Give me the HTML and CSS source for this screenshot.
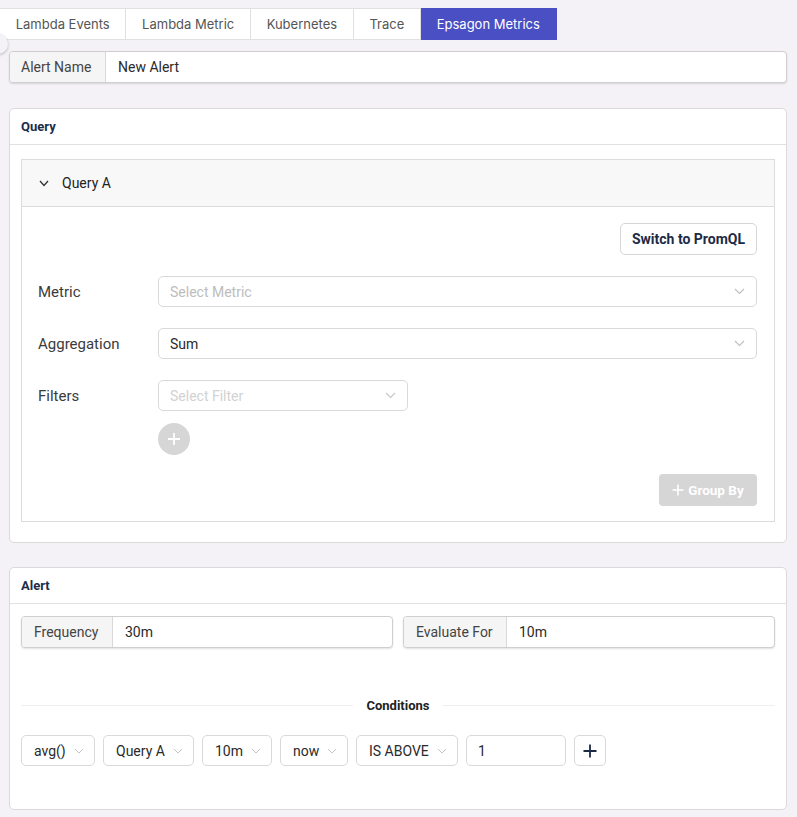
FILE: index.html
```html
<!DOCTYPE html>
<html>
<head>
<meta charset="utf-8">
<link rel="stylesheet" href="styles.css">
</head>
<body>
<div class="tabs">
  <div class="tab">Lambda Events</div>
  <div class="tab">Lambda Metric</div>
  <div class="tab">Kubernetes</div>
  <div class="tab">Trace</div>
  <div class="tab active">Epsagon Metrics</div>
</div>
<div class="knob"></div>
<main class="page">
  <div class="group name-group">
    <div class="addon addon-name">Alert Name</div>
    <div class="group-value">New Alert</div>
  </div>

  <section class="card query-card">
    <div class="card-head">Query</div>
    <div class="card-body">
      <div class="panel">
        <div class="panel-head">
          <svg class="chev-dark" width="10" height="7" viewBox="0 0 10 7"><path d="M1 1l4 4.5L9 1" fill="none" stroke="#333" stroke-width="1.3"/></svg>
          <span>Query A</span>
        </div>
        <div class="panel-body">
          <div class="row-right"><button class="btn-outline">Switch to PromQL</button></div>
          <div class="field">
            <div class="field-label">Metric</div>
            <div class="select wide"><span class="ph">Select Metric</span><svg class="chev" width="11" height="7" viewBox="0 0 11 7"><path d="M1 1l4.5 4.5L10 1" fill="none" stroke="#bfbfbf" stroke-width="1.1"/></svg></div>
          </div>
          <div class="field">
            <div class="field-label">Aggregation</div>
            <div class="select wide"><span class="val">Sum</span><svg class="chev" width="11" height="7" viewBox="0 0 11 7"><path d="M1 1l4.5 4.5L10 1" fill="none" stroke="#bfbfbf" stroke-width="1.1"/></svg></div>
          </div>
          <div class="field">
            <div class="field-label">Filters</div>
            <div class="select filter"><span class="ph light">Select Filter</span><svg class="chev" width="11" height="7" viewBox="0 0 11 7"><path d="M1 1l4.5 4.5L10 1" fill="none" stroke="#c8c8c8" stroke-width="1.1"/></svg></div>
          </div>
          <div class="add-row">
            <div class="plus-circle"><svg width="14" height="14" viewBox="0 0 14 14"><path d="M7 1v12M1 7h12" stroke="#fff" stroke-width="1.8"/></svg></div>
          </div>
          <div class="row-right group-row"><button class="btn-disabled"><svg width="12" height="12" viewBox="0 0 12 12"><path d="M6 0.5v11M0.5 6h11" stroke="#fff" stroke-width="1.6"/></svg>Group By</button></div>
        </div>
      </div>
    </div>
  </section>

  <section class="card alert-card">
    <div class="card-head">Alert</div>
    <div class="card-body alert-body">
      <div class="pair">
        <div class="group">
          <div class="addon addon-freq">Frequency</div>
          <div class="group-value">30m</div>
        </div>
        <div class="group">
          <div class="addon addon-eval">Evaluate For</div>
          <div class="group-value">10m</div>
        </div>
      </div>
      <div class="divider"><span class="line"></span><span class="divider-text">Conditions</span><span class="line"></span></div>
      <div class="conds">
        <div class="csel w-avg"><span>avg()</span><svg width="10" height="6" viewBox="0 0 10 6"><path d="M1 1l4 4 4-4" fill="none" stroke="#c4c4c4" stroke-width="1"/></svg></div>
        <div class="csel w-q"><span>Query A</span><svg width="10" height="6" viewBox="0 0 10 6"><path d="M1 1l4 4 4-4" fill="none" stroke="#c4c4c4" stroke-width="1"/></svg></div>
        <div class="csel w-10"><span>10m</span><svg width="10" height="6" viewBox="0 0 10 6"><path d="M1 1l4 4 4-4" fill="none" stroke="#c4c4c4" stroke-width="1"/></svg></div>
        <div class="csel w-now"><span>now</span><svg width="10" height="6" viewBox="0 0 10 6"><path d="M1 1l4 4 4-4" fill="none" stroke="#c4c4c4" stroke-width="1"/></svg></div>
        <div class="csel w-is"><span>IS ABOVE</span><svg width="10" height="6" viewBox="0 0 10 6"><path d="M1 1l4 4 4-4" fill="none" stroke="#c4c4c4" stroke-width="1"/></svg></div>
        <div class="cinput">1</div>
        <div class="cplus"><svg width="14" height="14" viewBox="0 0 14 14"><path d="M7 0.5v13M0.5 7h13" stroke="#1b2b45" stroke-width="1.8"/></svg></div>
      </div>
    </div>
  </section>
</main>
</body>
</html>
```

FILE: styles.css
```css
* { box-sizing: border-box; }
html, body { margin: 0; padding: 0; }
body {
  background: #f4f1f7;
  font-family: Roboto, "Liberation Sans", Arial, sans-serif;
  color: #333;
  width: 797px;
  height: 817px;
  overflow: hidden;
  position: relative;
}
.tabs {
  display: flex;
  margin-top: 8px;
  height: 32px;
}
.tab {
  background: #fff;
  border: 1px solid #e0e0e0;
  border-left: none;
  padding: 0 15.7px;
  display: flex;
  align-items: center;
  font-family: Inter, "Noto Sans", sans-serif;
  font-size: 13px;
  color: #555;
  white-space: nowrap;
}
.tab.active {
  background: #4a4fc4;
  border-color: #4a4fc4;
  color: #fff;
}
.knob {
  position: absolute;
  left: -12px;
  top: 34px;
  width: 20px;
  height: 20px;
  border-radius: 50%;
  background: #f4f1f7;
  box-shadow: 0 1px 3px rgba(0,0,0,0.25);
}
.page {
  padding: 0 10px 0 9px;
}
.group {
  display: flex;
  height: 32px;
  border: 1px solid #cfcfcf;
  border-radius: 4px;
  background: #fff;
  box-shadow: 0 1px 2px rgba(0,0,0,0.12);
  overflow: hidden;
  font-size: 14px;
}
.name-group { margin-top: 11px; }
.addon {
  background: #f5f5f5;
  border-right: 1px solid #d9d9d9;
  display: flex;
  align-items: center;
  padding: 0 11px;
  color: #444;
}
.addon-name { width: 96px; }
.addon-freq { width: 91px; padding-left: 12px; }
.addon-eval { width: 103px; padding-left: 12px; }
.group-value {
  flex: 1;
  display: flex;
  align-items: center;
  padding: 0 12px;
  color: #2a2a2a;
}
.card {
  background: #fff;
  border: 1px solid #dadada;
  border-radius: 5px;
}
.query-card { margin-top: 25px; }
.alert-card { margin-top: 24px; height: 243px; }
.card-head {
  height: 36px;
  border-bottom: 1px solid #e2e2e2;
  display: flex;
  align-items: center;
  padding: 0 11px;
  font-size: 13px;
  font-weight: 700;
  color: #1c2d4a;
}
.card-body {
  padding: 14px 11px 20px 11px;
}
.panel {
  border: 1px solid #dcdcdc;
}
.panel-head {
  height: 47px;
  background: #f8f8f8;
  border-bottom: 1px solid #dcdcdc;
  display: flex;
  align-items: center;
  padding-left: 17px;
  font-size: 14px;
  color: #222;
}
.chev-dark { margin-right: 13px; }
.panel-body {
  padding: 16px 17px 15px 16px;
}
.row-right {
  display: flex;
  justify-content: flex-end;
}
.btn-outline {
  height: 32px;
  width: 137px;
  padding: 0;
  background: #fff;
  border: 1px solid #d6d6d6;
  border-radius: 5px;
  font-family: Roboto, "Liberation Sans", sans-serif;
  font-size: 14px;
  font-weight: 700;
  color: #1b2b45;
}
.field {
  display: flex;
  align-items: center;
  margin-top: 21px;
}
.field-label {
  width: 120px;
  font-size: 15px;
  color: #3b3b3b;
}
.select {
  height: 31px;
  border: 1px solid #d9d9d9;
  border-radius: 5px;
  display: flex;
  align-items: center;
  justify-content: space-between;
  padding: 0 11px 0 11px;
  font-size: 14px;
}
.select.wide { flex: 1; }
.select.filter { width: 250px; }
.ph { color: #bdbdbd; }
.ph.light { color: #d2d2d2; }
.val { color: #2a2a2a; }
.add-row {
  margin-top: 12px;
  padding-left: 120px;
}
.plus-circle {
  width: 32px;
  height: 32px;
  border-radius: 50%;
  background: #d6d6d6;
  display: flex;
  align-items: center;
  justify-content: center;
}
.group-row { margin-top: 19px; }
.btn-disabled {
  height: 32px;
  width: 98px;
  border: none;
  border-radius: 4px;
  background: #d6d6d6;
  color: #fff;
  font-family: Roboto, "Liberation Sans", sans-serif;
  font-size: 13.5px;
  font-weight: 700;
  display: flex;
  align-items: center;
  justify-content: center;
  gap: 4px;
}
.alert-body { padding-top: 12px; }
.pair {
  display: flex;
  gap: 10px;
}
.pair .group { flex: 1; }
.divider {
  display: flex;
  align-items: center;
  margin-top: 47px;
  height: 20px;
}
.line {
  flex: 1;
  height: 1px;
  background: #efefef;
}
.divider-text {
  padding: 0 13px;
  font-size: 13px;
  font-weight: 700;
  color: #222;
}
.conds {
  display: flex;
  gap: 8px;
  margin-top: 20px;
}
.csel, .cinput, .cplus {
  height: 31px;
  border: 1px solid #d9d9d9;
  border-radius: 5px;
  display: flex;
  align-items: center;
  font-size: 14px;
  color: #2a2a2a;
  white-space: nowrap;
  flex-shrink: 0;
}
.csel {
  padding: 0 10px 0 12px;
  justify-content: space-between;
  gap: 5px;
}
.csel svg { flex-shrink: 0; }
.w-avg { width: 74px; }
.w-q { width: 91px; }
.w-10 { width: 70px; }
.w-now { width: 68px; }
.w-is { width: 102px; }
.cinput { width: 100px; padding: 0 11px; }
.cplus { width: 32px; justify-content: center; }
```
